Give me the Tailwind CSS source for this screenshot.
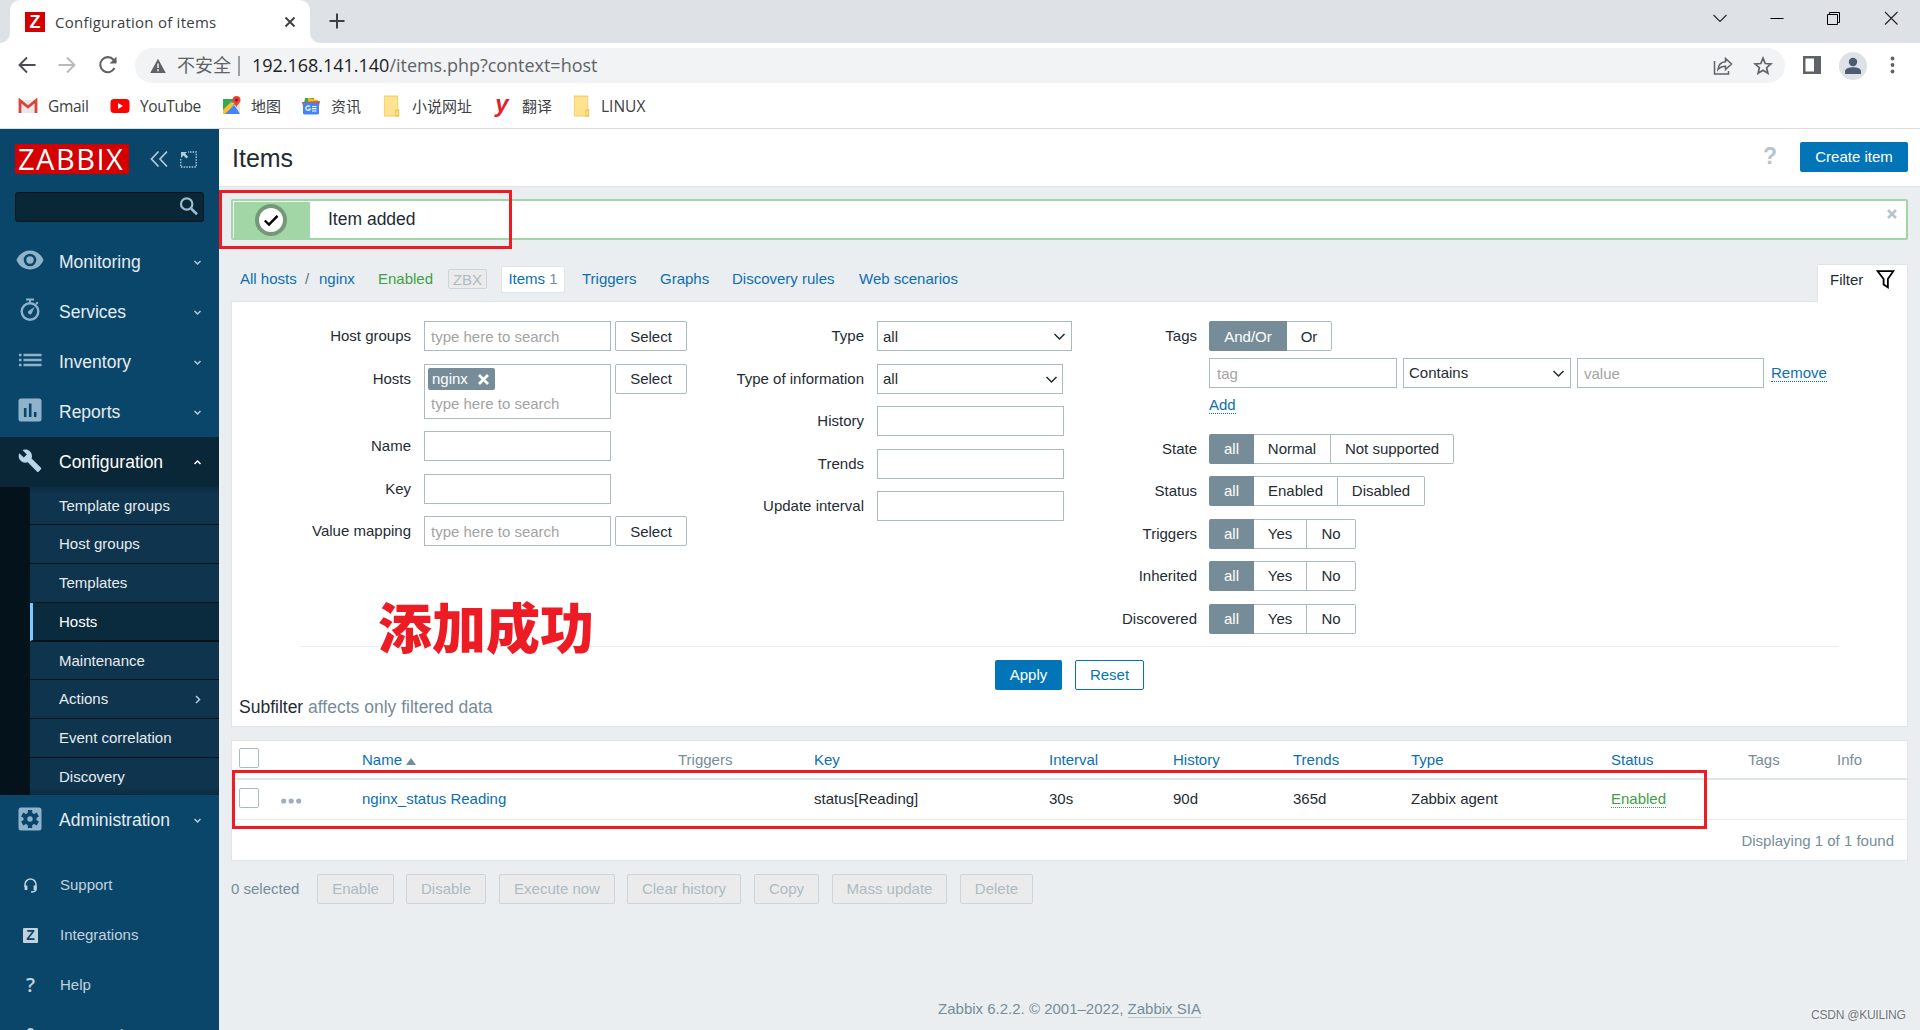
<!DOCTYPE html>
<html lang="en">
<head>
    <meta charset="UTF-8">
    <meta name="viewport" content="width=device-width, initial-scale=1.0">
    <title>Configuration of items</title>
    <script src="https://cdn.jsdelivr.net/npm/@tailwindcss/browser@4"></script>
</head>
<body class="relative w-[1920px] h-[1030px] overflow-hidden bg-[#ebeef0] font-['Liberation_Sans',Arial,sans-serif] text-[15px] leading-5 text-[#1f2c33]">

    <!-- Browser window -->
    <div class="h-[129px] bg-white border-b border-[#dadce0] font-['Open_Sans','Noto_Sans_CJK_SC',sans-serif] text-[#3c4043]">
        <div class="h-[43px] bg-[#dee1e6] flex justify-between">
            <div class="flex items-end">
                <svg class="w-[10px] h-[10px]" viewBox="0 0 10 10"><path d="M10 0v10H0A10 10 0 0 0 10 0z" fill="#fff"/></svg>
                <div class="w-[300px] h-[43px] bg-white rounded-t-[10px] flex items-center pl-[15px] pr-[12px]">
                    <div class="w-5 h-5 bg-[#d40000] text-white font-['Liberation_Sans',sans-serif] font-bold text-[18px] leading-5 text-center">Z</div>
                    <span class="ml-[10px] text-[15px] tracking-[0.24px] whitespace-nowrap">Configuration of items</span>
                    <svg class="ml-auto w-4 h-4" viewBox="0 0 16 16" fill="none" stroke="#3c4043" stroke-width="1.9"><path d="M3.5 3.5l9 9M12.5 3.5l-9 9"/></svg>
                </div>
                <svg class="w-[10px] h-[10px]" viewBox="0 0 10 10"><path d="M0 0v10h10A10 10 0 0 1 0 0z" fill="#fff"/></svg>
                <svg class="ml-[9px] mb-[14px] w-4 h-4" viewBox="0 0 16 16" fill="none" stroke="#3c4043" stroke-width="2"><path d="M8 .5v15M.5 8h15"/></svg>
            </div>
            <div class="flex items-center h-9 pr-[21px] gap-[41px]">
                <svg class="w-4 h-4" viewBox="0 0 16 16" fill="none" stroke="#222" stroke-width="1.1"><path d="M1.5 5l6.5 6.5L14.500 5"/></svg>
                <svg class="w-4 h-4" viewBox="0 0 16 16" fill="none" stroke="#000" stroke-width="1"><path d="M1.500 8.500h13"/></svg>
                <svg class="w-4 h-4" viewBox="0 0 16 16" fill="none" stroke="#000" stroke-width="1"><path d="M1.500 4.500h10v10h-10zM3.500 4.500v-2h10v10h-2"/></svg>
                <svg class="w-4 h-4" viewBox="0 0 16 16" fill="none" stroke="#222" stroke-width="1.1"><path d="M2 2l12.500 12.500M14.500 2L2 14.500"/></svg>
            </div>
        </div>

        <div class="h-[45px] flex items-center pl-[17px]">
            <svg class="-mt-[2px] w-5 h-5" viewBox="0 0 20 20" fill="none" stroke="#4a4d51" stroke-width="1.9"><path d="M18.500 10H3M10 2.500L2.500 10l7.500 7.500"/></svg>
            <svg class="-mt-[2px] ml-5 w-5 h-5" viewBox="0 0 20 20" fill="none" stroke="#b8babd" stroke-width="1.9"><path d="M1.500 10H17M10 2.500l7.500 7.500-7.500 7.500"/></svg>
            <svg class="-mt-[2px] ml-[21px] w-5 h-5" viewBox="0 0 20 20" fill="none" stroke="#5f6368" stroke-width="2.100"><path d="M16.500 13A7.500 7.500 0 1 1 15.500 4.800L18 7.300"/><path d="M18.500 1.500v7h-7z" fill="#5f6368" stroke="none"/></svg>
            <div class="ml-[17px] w-[1650px] h-[35px] rounded-full bg-[#f1f3f4] flex items-center pl-[15px] pr-3">
                <svg class="w-4 h-4" viewBox="0 0 16 16"><path d="M8 .8L15.800 15H.2z" fill="#5f6368"/><path d="M8 5.500v4.500M8 11.200v2" stroke="#f1f3f4" stroke-width="1.500"/></svg>
                <span class="-mt-px ml-[11px] text-[18px] text-[#5f6368]">不安全</span>
                <span class="ml-[7px] w-[2px] h-5 bg-[#9aa0a6]"></span>
                <span class="-mt-[2px] ml-3 text-[18px] tracking-[-0.02px] text-[#5f6368] whitespace-nowrap"><span class="text-[#202124]">192.168.141.140</span>/items.php?context=host</span>
                <svg class="ml-auto w-5 h-5" viewBox="0 0 20 20" fill="none" stroke="#5f6368" stroke-width="1.500"><path d="M1.500 5v13h14v-3"/><path d="M5 13.500c.5-5 3-7.500 7.500-7.800V2.500l6 5.500-6 5.500v-3.200c-3.500 0-5.500 1-7.500 3.200z"/></svg>
                <svg class="ml-5 w-5 h-5" viewBox="0 0 20 20" fill="none" stroke="#5f6368" stroke-width="1.700"><path d="M10 2.200l2.200 5.300 5.700.5-4.300 3.700 1.300 5.600L10 14.300l-4.900 3 1.300-5.600L2.100 8l5.700-.5z"/></svg>
            </div>
            <svg class="-mt-[2px] ml-[17px] w-5 h-5" viewBox="0 0 20 20"><path d="M1 1h18v18H1z" fill="#5f6368"/><path d="M3.500 3.500H12v13H3.500z" fill="#fff"/></svg>
            <svg class="ml-[17px] w-7 h-7" viewBox="0 0 28 28"><circle cx="14" cy="14" r="14" fill="#dee1e6"/><circle cx="14" cy="10" r="4.200" fill="#4d5b75"/><path d="M6 22v-2.500c0-3 4-4.300 8-4.300s8 1.300 8 4.300V22z" fill="#4d5b75"/></svg>
            <svg class="-mt-px ml-[15px] w-5 h-5" viewBox="0 0 20 20" fill="#5f6368"><circle cx="10.500" cy="3.500" r="1.900"/><circle cx="10.500" cy="10" r="1.900"/><circle cx="10.500" cy="16.500" r="1.900"/></svg>
        </div>

        <div class="h-10 flex items-center pl-[18px] pb-1 text-[15.500px] whitespace-nowrap">
            <svg class="w-5 h-4" viewBox="0 0 20 16"><path d="M1 2h18v13H1z" fill="#e8e8e8"/><path d="M2 15V2.500l8 6.500 8-6.500V15" fill="none" stroke="#db4437" stroke-width="2.800"/></svg>
            <span class="ml-[10px] w-[42px] tracking-[-0.3px]">Gmail</span>
            <svg class="ml-5 w-5 h-4" viewBox="0 0 20 16"><rect x=".5" y="1" width="19" height="14" rx="3.500" fill="#f00"/><path d="M8 5l5 3-5 3z" fill="#fff"/></svg>
            <span class="ml-[10px] w-[62px] tracking-[-0.4px]">YouTube</span>
            <svg class="ml-5 w-5 h-5" viewBox="0 0 20 20"><path d="M1 3h13l-13 15z" fill="#34a853"/><path d="M1 18L12 7l6 11z" fill="#4285f4"/><path d="M12 9l6 8V8z" fill="#dfe3e7"/><path d="M1 14l8-8 3 3-9 9H1z" fill="#fbc02d"/><path d="M14.500 0a4 4 0 0 1 4 4c0 3-3 4-4 7.500-1-3.500-4-4.500-4-7.500a4 4 0 0 1 4-4z" fill="#ea4335"/><circle cx="14.500" cy="4" r="1.400" fill="#811"/></svg>
            <span class="ml-[9px] w-[30px] text-[15px]">地图</span>
            <svg class="ml-[20px] w-5 h-5" viewBox="0 0 20 20"><path d="M4 2h9v6H3z" fill="#34a853"/><path d="M7 2l10 2v6H7z" fill="#fbbc04"/><path d="M1 6l18-1-1 5H2z" fill="#ea4335"/><rect x="2" y="6.500" width="16" height="12" rx="1.500" fill="#4285f4"/><path d="M9 10.700a2.300 2.300 0 1 0 .3 2.300H7.500M11 10.500h4.500M11 12.700h4.500M11 15h4.500" stroke="#fff" stroke-width="1.200" fill="none"/></svg>
            <span class="ml-[10px] w-[30px] text-[15px]">资讯</span>
            <svg class="ml-[21px] w-[19px] h-[22px]" viewBox="0 0 20 20" preserveAspectRatio="none"><path d="M2.500 1h14V13h1v6h-15z" fill="#ffe391" stroke="#f5d066"/><path d="M14.500 19V14h3v5z" fill="#ffe391" stroke="#eec04a"/></svg>
            <span class="ml-[11px] w-[60px] text-[15px]">小说网址</span>
            <span class="ml-5 w-5 h-6 text-center text-[#e8202c] font-['Liberation_Sans',sans-serif] font-black italic text-[24px] leading-[19px]">y</span>
            <span class="ml-[10px] w-[30px] text-[15px]">翻译</span>
            <svg class="ml-5 w-[19px] h-[22px]" viewBox="0 0 20 20" preserveAspectRatio="none"><path d="M2.500 1h14V13h1v6h-15z" fill="#ffe391" stroke="#f5d066"/><path d="M14.500 19V14h3v5z" fill="#ffe391" stroke="#eec04a"/></svg>
            <span class="ml-[10px]">LINUX</span>
        </div>
    </div>

    <div class="flex h-[901px]">
        <!-- Sidebar -->
        <aside class="w-[219px] shrink-0 bg-[#0a466a] text-[#e6ecf0] overflow-hidden">
            <div class="flex items-center pt-[15px] pl-[15px]">
                <div class="w-[114px] h-[30px] pl-[3px] bg-[#d40000] text-white font-['Open_Sans',sans-serif] font-medium text-[29px] leading-[29px] tracking-[1.500px] whitespace-nowrap">ZABBIX</div>
                <svg class="ml-[20px] w-5 h-5" viewBox="0 0 20 20" fill="none" stroke="#b4cbd9" stroke-width="1.700"><path d="M9.500 2.500L2.500 10l7 7.500M18 2.500L11 10l7 7.500"/></svg>
                <svg class="ml-[11px] w-[17px] h-[17px]" viewBox="0 0 17 17" fill="none" stroke="#b4cbd9"><path d="M.8 8v8h15.400V1H8" stroke-width="1.300" stroke-dasharray="1.500 1.200"/><path d="M1 1h6L5.200 2.800l3 3-1.800 1.800-3-3L1 7z" fill="#b4cbd9" stroke="none"/></svg>
            </div>
            <div class="mt-[18px] ml-[15px] w-[189px] h-[30px] rounded-[3px] bg-[#0a2737] border border-[#04141d] flex items-center justify-end pr-[5px]">
                <svg class="w-[19px] h-[19px] -mt-px" viewBox="0 0 19 19" fill="none" stroke="#9dbccf"><circle cx="7.700" cy="7" r="5.700" stroke-width="2.200"/><path d="M12 11.500l6 5.800" stroke-width="2.600"/></svg>
            </div>

            <nav class="mt-[15px] text-[17.500px]">
                <div class="h-[50px] flex items-center pl-4">
                    <svg class="w-7 h-7 -mt-1" viewBox="0 0 28 28"><path d="M.5 14C3 8 8 4.500 14 4.500S25 8 27.500 14C25 20 20 23.500 14 23.500S3 20 .5 14z" fill="#8fb3ca"/><circle cx="14" cy="14" r="6.300" fill="#0a466a"/><circle cx="14" cy="14" r="3.700" fill="#8fb3ca"/></svg>
                    <span class="ml-[15px]">Monitoring</span>
                    <svg class="ml-auto mr-[17px] w-[9px] h-[9px]" viewBox="0 0 9 9" fill="none" stroke="#b4cbd9" stroke-width="1.500"><path d="M1.500 3l3 3 3-3"/></svg>
                </div>
                <div class="h-[50px] flex items-center pl-4">
                    <svg class="w-7 h-7 -mt-1" viewBox="0 0 28 28" fill="none" stroke="#8fb3ca"><circle cx="14" cy="15.500" r="8.300" stroke-width="2.400"/><path d="M10 3.500h8M14 3.500V7M20 8l1.800-1.800" stroke-width="2"/><path d="M18.500 11l-2.700 6.200a2 2 0 1 1-3-2.500z" fill="#8fb3ca" stroke="none"/></svg>
                    <span class="ml-[15px]">Services</span>
                    <svg class="ml-auto mr-[17px] w-[9px] h-[9px]" viewBox="0 0 9 9" fill="none" stroke="#b4cbd9" stroke-width="1.500"><path d="M1.500 3l3 3 3-3"/></svg>
                </div>
                <div class="h-[50px] flex items-center pl-4">
                    <svg class="w-7 h-7 -mt-1" viewBox="0 0 28 28" fill="none" stroke="#8fb3ca" stroke-width="2.400"><path d="M3 9h2.500M7.500 9h18M3 14h2.500M7.500 14h18M3 19h2.500M7.500 19h18"/></svg>
                    <span class="ml-[15px]">Inventory</span>
                    <svg class="ml-auto mr-[17px] w-[9px] h-[9px]" viewBox="0 0 9 9" fill="none" stroke="#b4cbd9" stroke-width="1.500"><path d="M1.500 3l3 3 3-3"/></svg>
                </div>
                <div class="h-[50px] flex items-center pl-4">
                    <svg class="w-7 h-7 -mt-1" viewBox="0 0 28 28"><rect x="2.500" y="2.500" width="23" height="23" rx="2.500" fill="#8fb3ca"/><path d="M9.200 12v9M14.200 7.500V21M19.200 16v5" stroke="#0a466a" stroke-width="2.600"/></svg>
                    <span class="ml-[15px]">Reports</span>
                    <svg class="ml-auto mr-[17px] w-[9px] h-[9px]" viewBox="0 0 9 9" fill="none" stroke="#b4cbd9" stroke-width="1.500"><path d="M1.500 3l3 3 3-3"/></svg>
                </div>
                <div class="h-[50px] flex items-center pl-4 bg-[#0a2737] text-white">
                    <svg class="w-7 h-7 -mt-1" viewBox="0 0 24 24" fill="#b9d6e8"><path d="M22 19l-9.100-9.100c.9-2.300.4-5-1.500-6.900-2-2-5-2.400-7.400-1.300L8.300 6 5.300 9 .9 4.700C-.2 7.100.3 10.100 2.300 12.100c1.900 1.900 4.600 2.400 6.900 1.500l9.100 9.100c.4.4 1 .4 1.400 0l2.300-2.300c.5-.4.500-1.100 0-1.400z" transform="translate(2 2) scale(.88)"/></svg>
                    <span class="ml-[15px]">Configuration</span>
                    <svg class="ml-auto mr-[17px] w-[9px] h-[9px]" viewBox="0 0 9 9" fill="none" stroke="#fff" stroke-width="1.500"><path d="M1.500 6l3-3 3 3"/></svg>
                </div>
                <div class="h-[308px] pl-[30px] bg-[#04131b] text-[15px]">
                    <div class="h-[38px] pl-[29px] flex items-center border-b border-[#04131b] bg-linear-to-b from-[#0d2b3e] from-0% to-[#0f344d] to-20%">Template groups</div>
                    <div class="h-[39px] pl-[29px] flex items-center border-b border-[#04131b] bg-[#0f344d]">Host groups</div>
                    <div class="h-[39px] pl-[29px] flex items-center border-b border-[#04131b] bg-[#0f344d]">Templates</div>
                    <div class="h-[38px] pl-[26px] flex items-center border-b border-b-[#04131b] border-l-3 border-l-[#7fc7ff] bg-[#0a2a3e] text-white">Hosts</div>
                    <div class="h-[39px] pl-[29px] flex items-center border-y border-[#04131b] bg-[#0f344d]">Maintenance</div>
                    <div class="h-[39px] pl-[29px] flex items-center border-b border-[#04131b] bg-[#0f344d]">Actions
                        <svg class="ml-auto mr-[17px] w-[9px] h-[9px]" viewBox="0 0 9 9" fill="none" stroke="#b4cbd9" stroke-width="1.500"><path d="M3 1l3.500 3.500L3 8"/></svg>
                    </div>
                    <div class="h-[39px] pl-[29px] flex items-center border-b border-[#04131b] bg-[#0f344d]">Event correlation</div>
                    <div class="h-[37px] pl-[29px] flex items-center bg-linear-to-b from-[#0f344d] from-80% to-[#0d2b3e] to-100%">Discovery</div>
                </div>
                <div class="h-[50px] flex items-center pl-4">
                    <svg class="w-7 h-7 -mt-[2px]" viewBox="0 0 28 28"><rect x="2.500" y="2.500" width="23" height="23" rx="2.500" fill="#8fb3ca"/><circle cx="14" cy="14" r="6.500" fill="#0a466a"/><path d="M14 5v18M6.200 9.500l15.600 9M6.200 18.500l15.600-9" stroke="#0a466a" stroke-width="4.400"/><circle cx="14" cy="14" r="2.700" fill="#8fb3ca"/></svg>
                    <span class="ml-[15px]">Administration</span>
                    <svg class="ml-auto mr-[17px] w-[9px] h-[9px]" viewBox="0 0 9 9" fill="none" stroke="#b4cbd9" stroke-width="1.500"><path d="M1.500 3l3 3 3-3"/></svg>
                </div>
            </nav>

            <div class="mt-[15px] text-[#c3d2dc]">
                <div class="h-[50px] flex items-center pl-[23px]">
                    <svg class="w-[15px] h-[15px]" viewBox="0 0 15 15" fill="none" stroke="#c3d2dc"><path d="M2 9V6.500a5.500 5.500 0 0 1 11 0V11c0 2-1.500 3-5 3" stroke-width="1.500"/><path d="M3 7.500v4.500M12 7.500v4.500" stroke-width="2.800"/></svg>
                    <span class="ml-[22px]">Support</span>
                </div>
                <div class="h-[50px] flex items-center pl-[23px]">
                    <span class="w-[15px] h-[15px] rounded-[1px] bg-[#c3d2dc] text-[#0a466a] font-bold text-[14px] leading-[15px] text-center">Z</span>
                    <span class="ml-[22px]">Integrations</span>
                </div>
                <div class="h-[50px] flex items-center pl-[23px]">
                    <span class="w-[15px] text-center font-['Open_Sans',sans-serif] font-semibold text-[20px] leading-5">?</span>
                    <span class="ml-[22px]">Help</span>
                </div>
                <div class="h-[50px] flex items-center pl-[23px]">
                    <svg class="w-[15px] h-[15px]" viewBox="0 0 15 15" fill="#c3d2dc"><circle cx="7.500" cy="3.700" r="3.700"/><path d="M0 15c0-4 3-6 7.500-6s7.500 2 7.500 6z"/></svg>
                    <span class="ml-[22px]">User settings</span>
                </div>
            </div>
        </aside>

        <!-- Page content -->
        <main class="flex-1 min-w-0">
            <header class="h-[58px] bg-white border-b border-[#dfe4e7] flex items-center pl-[13px] pr-3">
                <h1 class="text-[25px] leading-8">Items</h1>
                <span class="ml-auto -mt-1 text-[#b8c4cc] font-bold text-[23px]">?</span>
                <button class="ml-[23px] -mt-px w-[108px] h-[30px] rounded-[2px] bg-[#0275b8] text-white">Create item</button>
            </header>

            <div class="pl-3 pr-3">
                <div class="mt-3 h-[41px] bg-white border-2 border-[#a3d6a7] rounded-[2px] flex">
                    <div class="m-px mb-0 w-[76px] bg-[#a3d6a7] flex items-center justify-center pr-[2px]">
                        <svg class="w-8 h-8 -mt-px" viewBox="0 0 32 32"><circle cx="16" cy="16" r="14" fill="#fff" stroke="#759878" stroke-width="4"/><path d="M9.800 16.500l4.200 4 8.500-8.700" fill="none" stroke="#000" stroke-width="2.400"/></svg>
                    </div>
                    <div class="ml-[17px] text-[17.500px] leading-[36px]">Item added</div>
                    <svg class="ml-auto mt-[8px] mr-[9px] w-[10px] h-[10px]" viewBox="0 0 10 10" stroke="#b8c4cc" stroke-width="2.600"><path d="M1 1l8 8M9 1l-8 8"/></svg>
                </div>

                <!-- Host navigation and filter tab -->
                <div class="mt-6 h-[37px] flex items-start text-[#0b6fb3] whitespace-nowrap">
                    <div class="h-[30px] flex items-center pl-[9px]">
                        <span class="w-[65px]">All hosts</span>
                        <span class="w-[14px] text-[#5d7482]">/</span>
                        <span class="w-[59px]">nginx</span>
                        <span class="w-[70px] text-[#429e47]">Enabled</span>
                        <span class="w-[39px] h-5 rounded-[2px] border border-[#ccd5d9] bg-[#ebebeb] text-[#acbbc2] text-center leading-[19px]">ZBX</span>
                        <span class="ml-[14px] w-[64px] h-[27px] rounded-[2px] border border-[#dfe4e7] bg-white text-center leading-[24px]">Items <span class="text-[#768d99]">1</span></span>
                        <span class="ml-[17px] w-[78px]">Triggers</span>
                        <span class="w-[72px]">Graphs</span>
                        <span class="w-[127px]">Discovery rules</span>
                        <span>Web scenarios</span>
                    </div>
                    <div class="ml-auto relative z-10 w-[91px] h-[38px] rounded-t-[2px] bg-white border border-b-0 border-[#dfe4e7] flex items-center pl-3 pb-[7px] text-[#1f2c33]">
                        Filter
                        <svg class="ml-[13px] -mt-[2px] w-[19px] h-5" viewBox="0 0 20 20" fill="none" stroke="#000" stroke-width="1.900"><path d="M1.800 1.800h16.400l-5.700 8.200v8.700l-4.500-3V10z"/></svg>
                    </div>
                </div>

                <section class="h-[426px] bg-white border border-[#dfe4e7] pt-[19px]">
                    <div class="h-[325px] flex">
                        <div>
                            <div class="h-[43px] flex items-start">
                                <label class="w-[179px] leading-[30px] text-right">Host groups</label>
                                <input class="ml-[13px] w-[187px] h-[30px] px-[6px] pt-px border border-[#acbbc2] placeholder-[#a3a3a3]" placeholder="type here to search">
                                <button class="ml-1 w-[72px] h-[30px] pt-px border border-[#acbbc2] rounded-[2px]">Select</button>
                            </div>
                            <div class="h-[67px] flex items-start">
                                <label class="w-[179px] leading-[30px] text-right">Hosts</label>
                                <div class="ml-[13px] w-[187px] h-[55px] border border-[#acbbc2] p-[3px]">
                                    <div class="w-[67px] h-[22px] rounded-[2px] bg-[#768d99] text-white flex items-center pl-1">nginx
                                        <svg class="ml-[10px] w-[11px] h-[11px]" viewBox="0 0 11 11" stroke="#fff" stroke-width="2.800"><path d="M1 1l9 9M10 1l-9 9"/></svg>
                                    </div>
                                    <input class="block mt-1 w-[170px] h-5 pl-[3px] placeholder-[#a3a3a3]" placeholder="type here to search">
                                </div>
                                <button class="ml-1 w-[72px] h-[30px] border border-[#acbbc2] rounded-[2px]">Select</button>
                            </div>
                            <div class="h-[43px] flex items-start">
                                <label class="w-[179px] leading-[30px] text-right">Name</label>
                                <input class="ml-[13px] w-[187px] h-[30px] px-[6px] border border-[#acbbc2]">
                            </div>
                            <div class="h-[42px] flex items-start">
                                <label class="w-[179px] leading-[30px] text-right">Key</label>
                                <input class="ml-[13px] w-[187px] h-[30px] px-[6px] border border-[#acbbc2]">
                            </div>
                            <div class="h-[30px] flex items-start">
                                <label class="w-[179px] leading-[30px] text-right">Value mapping</label>
                                <input class="ml-[13px] w-[187px] h-[30px] px-[6px] pt-px border border-[#acbbc2] placeholder-[#a3a3a3]" placeholder="type here to search">
                                <button class="ml-1 w-[72px] h-[30px] pt-px border border-[#acbbc2] rounded-[2px]">Select</button>
                            </div>
                        </div>

                        <div class="w-[385px]">
                            <div class="h-[43px] flex items-start">
                                <label class="w-[177px] leading-[30px] text-right">Type</label>
                                <div class="ml-[13px] w-[195px] h-[30px] pt-px border border-[#acbbc2] flex items-center justify-between pl-[5px] pr-[5px]">all
                                    <svg class="w-[13px] h-[13px]" viewBox="0 0 13 13" fill="none" stroke="#1f2c33" stroke-width="1.500"><path d="M1.500 4l5 5 5-5"/></svg>
                                </div>
                            </div>
                            <div class="h-[42px] flex items-start">
                                <label class="w-[177px] leading-[30px] text-right">Type of information</label>
                                <div class="ml-[13px] w-[186px] h-[30px] border border-[#acbbc2] flex items-center justify-between pl-[5px] pr-[4px]">all
                                    <svg class="w-[13px] h-[13px]" viewBox="0 0 13 13" fill="none" stroke="#1f2c33" stroke-width="1.500"><path d="M1.500 4l5 5 5-5"/></svg>
                                </div>
                            </div>
                            <div class="h-[43px] flex items-start">
                                <label class="w-[177px] leading-[30px] text-right">History</label>
                                <input class="ml-[13px] w-[187px] h-[30px] px-[6px] border border-[#acbbc2]">
                            </div>
                            <div class="h-[42px] flex items-start">
                                <label class="w-[177px] leading-[30px] text-right">Trends</label>
                                <input class="ml-[13px] w-[187px] h-[30px] px-[6px] border border-[#acbbc2]">
                            </div>
                            <div class="h-[42px] flex items-start">
                                <label class="w-[177px] leading-[30px] text-right">Update interval</label>
                                <input class="ml-[13px] w-[187px] h-[30px] px-[6px] border border-[#acbbc2]">
                            </div>
                        </div>

                        <div>
                            <div class="h-[113px] flex items-start">
                                <label class="w-[125px] leading-[30px] text-right">Tags</label>
                                <div class="ml-3">
                                    <div class="flex h-[30px] text-center leading-[29px]">
                                        <span class="w-[78px] rounded-l-[2px] bg-[#768d99] text-white leading-[31px]">And/Or</span>
                                        <span class="w-[45px] rounded-r-[2px] border border-l-0 border-[#acbbc2]">Or</span>
                                    </div>
                                    <div class="mt-[7px] flex items-center">
                                        <input class="w-[188px] h-[30px] px-[7px] border border-[#acbbc2] placeholder-[#a3a3a3]" placeholder="tag">
                                        <div class="ml-[6px] w-[168px] h-[30px] border border-[#acbbc2] flex items-center justify-between pl-[5px] pr-[5px]">Contains
                                            <svg class="w-[13px] h-[13px]" viewBox="0 0 13 13" fill="none" stroke="#1f2c33" stroke-width="1.500"><path d="M1.500 4l5 5 5-5"/></svg>
                                        </div>
                                        <input class="ml-[6px] w-[187px] h-[30px] px-[6px] border border-[#acbbc2] placeholder-[#a3a3a3]" placeholder="value">
                                        <a class="ml-[7px] text-[#0b6fb3] border-b border-dotted border-[#0b6fb3] leading-[17px]">Remove</a>
                                    </div>
                                    <a class="mt-2 inline-block text-[#0b6fb3] border-b border-dotted border-[#0b6fb3] leading-[17px]">Add</a>
                                </div>
                            </div>
                            <div class="h-[42px] flex items-start">
                                <label class="w-[125px] leading-[30px] text-right">State</label>
                                <div class="ml-3 flex h-[30px] text-center leading-[28px]">
                                    <span class="w-[45px] rounded-l-[2px] bg-[#768d99] text-white leading-[30px]">all</span>
                                    <span class="w-[77px] border border-l-0 border-[#acbbc2]">Normal</span>
                                    <span class="w-[123px] rounded-r-[2px] border border-l-0 border-[#acbbc2]">Not supported</span>
                                </div>
                            </div>
                            <div class="h-[43px] flex items-start">
                                <label class="w-[125px] leading-[30px] text-right">Status</label>
                                <div class="ml-3 flex h-[30px] text-center leading-[28px]">
                                    <span class="w-[45px] rounded-l-[2px] bg-[#768d99] text-white leading-[30px]">all</span>
                                    <span class="w-[84px] border border-l-0 border-[#acbbc2]">Enabled</span>
                                    <span class="w-[87px] rounded-r-[2px] border border-l-0 border-[#acbbc2]">Disabled</span>
                                </div>
                            </div>
                            <div class="h-[42px] flex items-start">
                                <label class="w-[125px] leading-[30px] text-right">Triggers</label>
                                <div class="ml-3 flex h-[30px] text-center leading-[28px]">
                                    <span class="w-[45px] rounded-l-[2px] bg-[#768d99] text-white leading-[30px]">all</span>
                                    <span class="w-[53px] border border-l-0 border-[#acbbc2]">Yes</span>
                                    <span class="w-[49px] rounded-r-[2px] border border-l-0 border-[#acbbc2]">No</span>
                                </div>
                            </div>
                            <div class="h-[43px] flex items-start">
                                <label class="w-[125px] leading-[30px] text-right">Inherited</label>
                                <div class="ml-3 flex h-[30px] text-center leading-[28px]">
                                    <span class="w-[45px] rounded-l-[2px] bg-[#768d99] text-white leading-[30px]">all</span>
                                    <span class="w-[53px] border border-l-0 border-[#acbbc2]">Yes</span>
                                    <span class="w-[49px] rounded-r-[2px] border border-l-0 border-[#acbbc2]">No</span>
                                </div>
                            </div>
                            <div class="h-[30px] flex items-start">
                                <label class="w-[125px] leading-[30px] text-right">Discovered</label>
                                <div class="ml-3 flex h-[30px] text-center leading-[28px]">
                                    <span class="w-[45px] rounded-l-[2px] bg-[#768d99] text-white leading-[30px]">all</span>
                                    <span class="w-[53px] border border-l-0 border-[#acbbc2]">Yes</span>
                                    <span class="w-[49px] rounded-r-[2px] border border-l-0 border-[#acbbc2]">No</span>
                                </div>
                            </div>
                        </div>
                    </div>
                    <div class="mx-[68px] border-t border-[#ebeef0]"></div>
                    <div class="mt-[13px] flex justify-center gap-[13px]">
                        <button class="w-[67px] h-[30px] rounded-[2px] bg-[#0275b8] text-white">Apply</button>
                        <button class="w-[69px] h-[30px] rounded-[2px] border border-[#0275b8] text-[#0275b8]">Reset</button>
                    </div>
                    <div class="mt-[7px] ml-[7px] text-[17.500px] text-[#768d99]"><span class="text-[#1f2c33]">Subfilter</span> affects only filtered data</div>
                </section>

                <!-- Items table -->
                <section class="mt-[13px] h-[121px] bg-white border border-[#dfe4e7]">
                    <div class="h-[39px] pl-[7px] grid grid-cols-[42px_81px_316px_136px_235px_124px_120px_118px_200px_137px_89px_1fr] items-center border-b-2 border-[#dfe4e7] text-[#0b6fb3]">
                        <span class="w-5 h-5 -mt-1 rounded-[2px] border border-[#acbbc2]"></span>
                        <span></span>
                        <span class="flex items-center">Name <svg class="ml-1 mt-[3px] w-[10px] h-[7px]" viewBox="0 0 10 7"><path d="M5 0l5 7H0z" fill="#768d99"/></svg></span>
                        <span class="text-[#768d99]">Triggers</span>
                        <span>Key</span>
                        <span>Interval</span>
                        <span>History</span>
                        <span>Trends</span>
                        <span>Type</span>
                        <span>Status</span>
                        <span class="text-[#768d99]">Tags</span>
                        <span class="text-[#768d99]">Info</span>
                    </div>
                    <div class="h-[40px] pl-[7px] pb-[2px] grid grid-cols-[42px_81px_316px_136px_235px_124px_120px_118px_200px_137px_89px_1fr] items-center border-b border-[#ebeef0]">
                        <span class="w-5 h-5 -mt-px rounded-[2px] border border-[#acbbc2]"></span>
                        <svg class="mt-[5px] w-[21px] h-[6px]" viewBox="0 0 21 6" fill="#9fb0ba"><circle cx="2.700" cy="3" r="2.600"/><circle cx="10.200" cy="3" r="2.600"/><circle cx="17.700" cy="3" r="2.600"/></svg>
                        <span class="text-[#0b6fb3]">nginx_status Reading</span>
                        <span></span>
                        <span>status[Reading]</span>
                        <span>30s</span>
                        <span>90d</span>
                        <span>365d</span>
                        <span>Zabbix agent</span>
                        <span><a class="text-[#429e47] border-b border-dotted border-[#429e47]">Enabled</a></span>
                        <span></span>
                        <span></span>
                    </div>
                    <div class="pr-[13px] text-right leading-[41px] text-[#768d99]">Displaying 1 of 1 found</div>
                </section>

                <div class="mt-[13px] flex items-center text-[#acbbc2]">
                    <span class="w-[86px] text-[#768d99]">0 selected</span>
                    <button class="w-[77px] h-[30px] rounded-[2px] border border-[#ccd5d9] bg-[#ebebeb]">Enable</button>
                    <button class="ml-3 w-[80px] h-[30px] rounded-[2px] border border-[#ccd5d9] bg-[#ebebeb]">Disable</button>
                    <button class="ml-[13px] w-[116px] h-[30px] rounded-[2px] border border-[#ccd5d9] bg-[#ebebeb]">Execute now</button>
                    <button class="ml-3 w-[114px] h-[30px] rounded-[2px] border border-[#ccd5d9] bg-[#ebebeb]">Clear history</button>
                    <button class="ml-[13px] w-[65px] h-[30px] rounded-[2px] border border-[#ccd5d9] bg-[#ebebeb]">Copy</button>
                    <button class="ml-[13px] w-[115px] h-[30px] rounded-[2px] border border-[#ccd5d9] bg-[#ebebeb]">Mass update</button>
                    <button class="ml-[13px] w-[73px] h-[30px] rounded-[2px] border border-[#ccd5d9] bg-[#ebebeb]">Delete</button>
                </div>

                <footer class="mt-[95px] text-center text-[#768d99]">Zabbix 6.2.2. © 2001–2022, <a class="border-b border-[#bcc7ce]">Zabbix SIA</a></footer>
            </div>
        </main>
    </div>

    <!-- Annotations over the page -->
    <div class="absolute left-[219px] top-[190px] w-[293px] h-[59px] border-3 border-[#ed1c24]"></div>
    <div class="absolute left-[232px] top-[770px] w-[1475px] h-[59px] border-3 border-[#ed1c24]"></div>
    <div class="absolute left-[378px] top-[597px] font-['Noto_Sans_CJK_SC',sans-serif] font-black text-[54px] leading-[58px] text-[#ed1c24] whitespace-nowrap">添加成功</div>
    <div class="absolute left-[1811px] top-[1006px] text-[12px] leading-[18px] tracking-[-0.23px] text-[#6f7478] [text-shadow:-1px_-1px_0_#fff] whitespace-nowrap">CSDN @KUILING</div>
</body>
</html>
